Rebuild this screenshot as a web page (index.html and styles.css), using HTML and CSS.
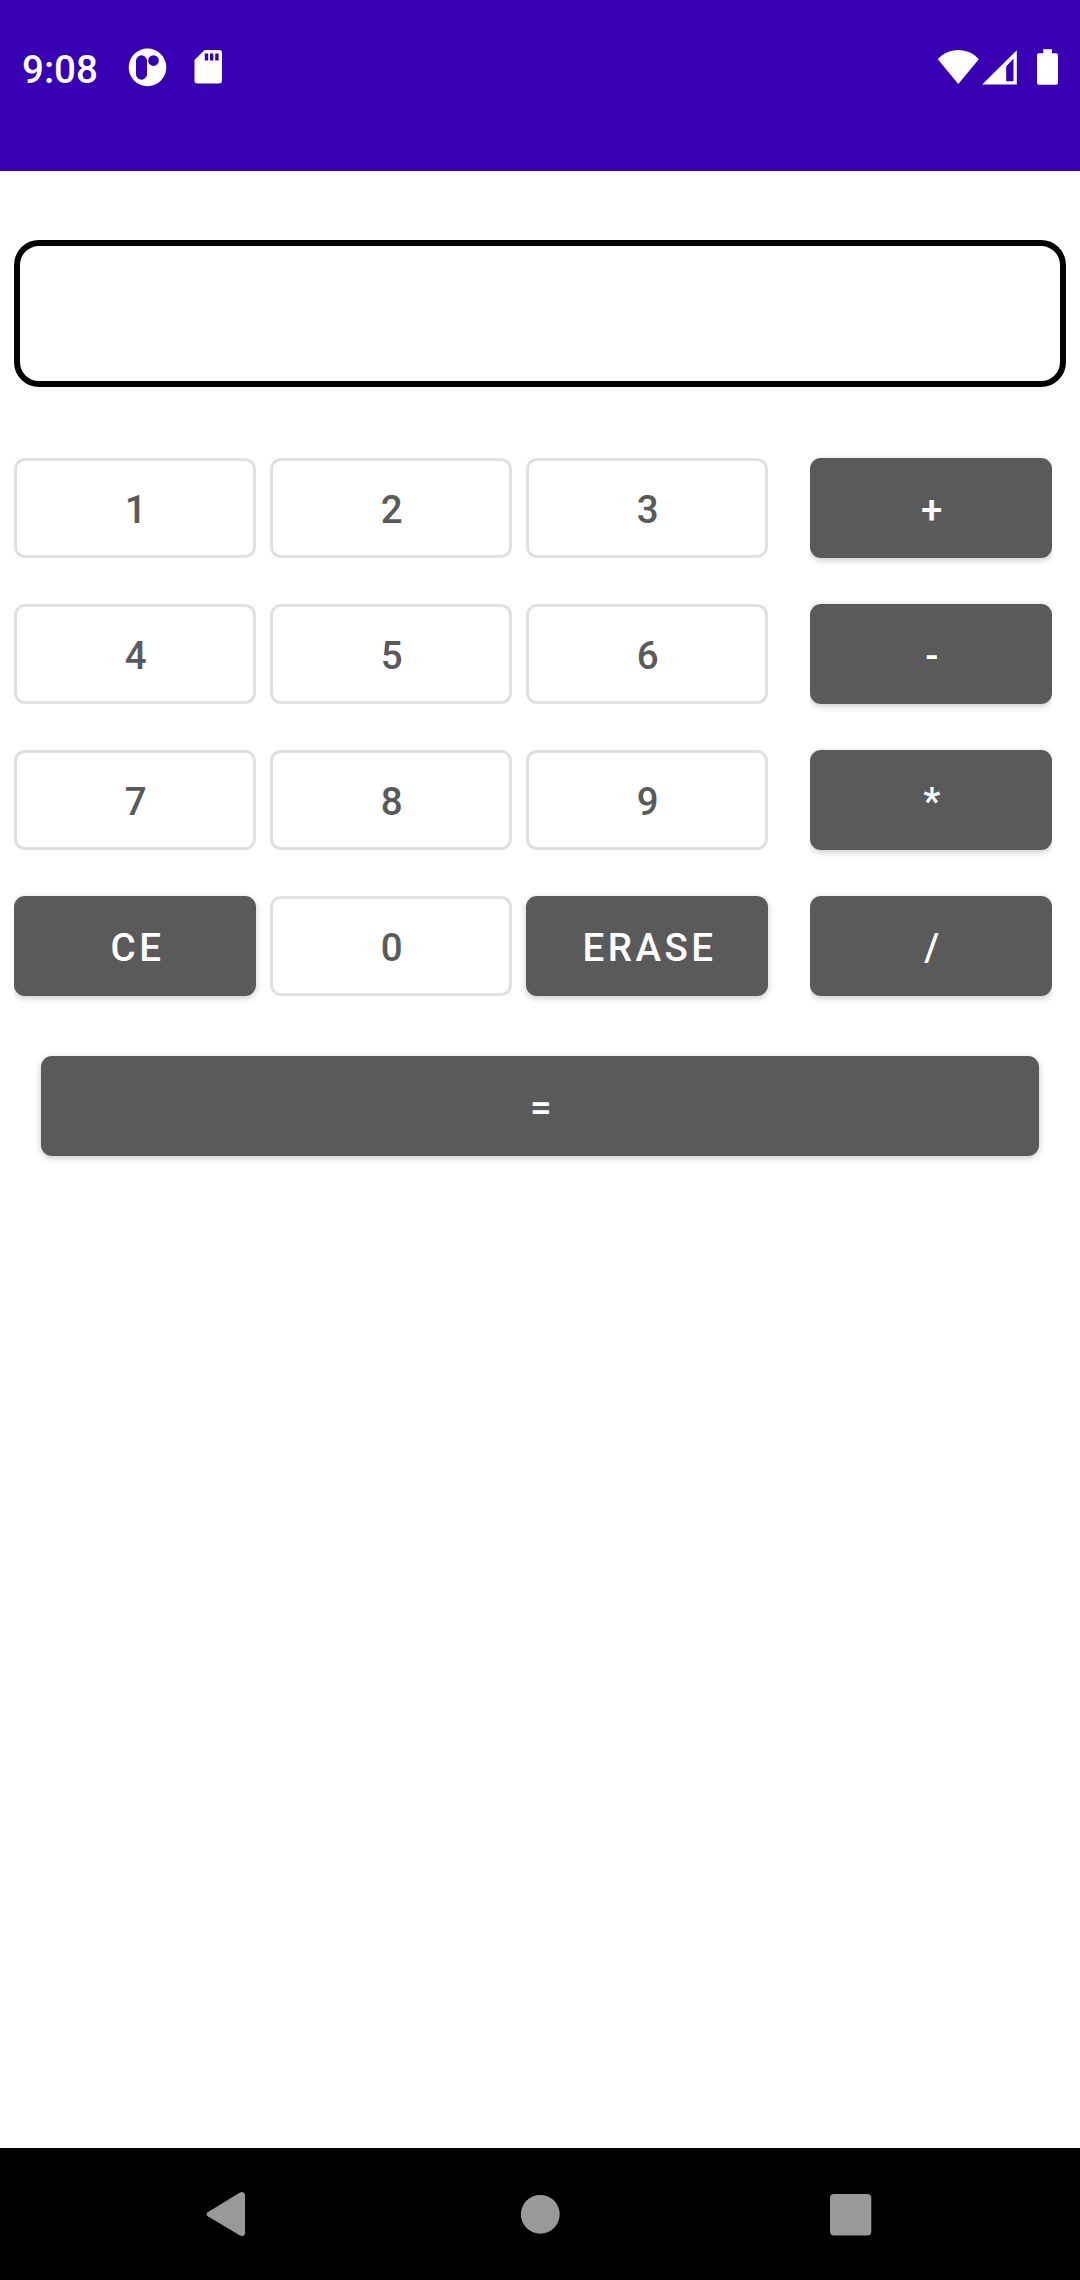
FILE: index.html
```
<!DOCTYPE html>
<html lang="en">
<head>
<meta charset="utf-8">
<title>Calculator</title>
<link rel="stylesheet" href="styles.css">
</head>
<body>
<header class="status-bar">
  <span class="clock">9:08</span>
  <svg class="icon-app" width="40" height="40" viewBox="0 0 40 40"><path fill="#fff" fill-rule="evenodd" d="M19.500 .6a18.800 18.800 0 1 1 0 37.600a18.800 18.800 0 0 1 0-37.600zM13.500 7.300a5.500 5.500 0 0 0-5.500 5.500v13.400a5.500 5.500 0 0 0 11 0v-13.400a5.500 5.500 0 0 0-5.500-5.500zM25.500 7.300a5.300 5.300 0 1 0 0 10.600a5.300 5.300 0 0 0 0-10.600z"/></svg>
  <svg class="icon-card" width="28" height="36" viewBox="0 0 28 36"><path fill="#fff" fill-rule="evenodd" d="M10.500 1H25a3 3 0 0 1 3 3v27.500a3 3 0 0 1-3 3H3.500a3 3 0 0 1-3-3V11zM10.800 4.500v7h3.400v-7zM16 4.500v7h3.400v-7zM21.200 4.500v7h3.400v-7z"/></svg>
  <span class="spacer"></span>
  <svg class="icon-wifi" width="42" height="36" viewBox="0 0 42 36"><path fill="#fff" d="M.8 10.200C6 4.500 13 1 21.300 1S36.500 4.500 41.800 10.200L21.300 35z"/></svg>
  <svg class="icon-signal" width="36" height="36" viewBox="0 0 36 36"><path fill="#fff" fill-rule="evenodd" d="M.2 35.500L34.800 1.200V35.500zM24.200 17.200V32.300H31.500V9.800z"/></svg>
  <svg class="icon-battery" width="22" height="37" viewBox="0 0 22 37"><path fill="#fff" d="M6.200 .3h8.800v4h4a2 2 0 0 1 2 2v27.500a2 2 0 0 1-2 2H2a2 2 0 0 1-2-2V6.300a2 2 0 0 1 2-2h4.200z"/></svg>
</header>
<main class="calculator">
  <div class="display"></div>
  <div class="keypad">
    <div class="digits">
      <button class="key outlined">1</button>
      <button class="key outlined">2</button>
      <button class="key outlined">3</button>
      <button class="key outlined">4</button>
      <button class="key outlined">5</button>
      <button class="key outlined">6</button>
      <button class="key outlined">7</button>
      <button class="key outlined">8</button>
      <button class="key outlined">9</button>
      <button class="key filled">CE</button>
      <button class="key outlined">0</button>
      <button class="key filled">ERASE</button>
    </div>
    <div class="operators">
      <button class="key filled">+</button>
      <button class="key filled">-</button>
      <button class="key filled">*</button>
      <button class="key filled">/</button>
    </div>
  </div>
  <button class="key filled equals">=</button>
</main>
<nav class="nav-bar">
  <svg width="44" height="48" viewBox="0 0 44 48"><path fill="#999" d="M3.800 22.200L35.500 2.700Q40 .5 41 4.500V43.500Q40 47.500 35.500 45.300L3.800 26.200Q1.200 24.200 3.800 22.200z"/></svg>
  <svg width="42" height="40" viewBox="0 0 42 40"><circle cx="22.300" cy="20.300" r="19.400" fill="#999"/></svg>
  <svg width="42" height="44" viewBox="0 0 42 44"><rect y="2" width="41.300" height="41.400" rx="4" fill="#999"/></svg>
</nav>
</body>
</html>
```
FILE: styles.css
```
* {
  box-sizing: border-box;
}

body {
  margin: 0;
  height: 2280px;
  display: flex;
  flex-direction: column;
  background: #fff;
  font-family: Roboto, "Liberation Sans", sans-serif;
}

svg {
  display: block;
  flex: none;
}

.status-bar {
  height: 171px;
  padding: 48px 21px 0 22px;
  display: flex;
  align-items: flex-start;
  background: #3700b3;
  color: #fff;
}

.clock {
  width: 106px;
  margin-top: -1px;
  font-size: 38.5px;
  line-height: 46px;
  font-weight: 500;
}

.icon-card {
  margin: 1px 0 0 26px;
}

.spacer {
  flex: 1;
}

.icon-wifi {
  margin-top: 1px;
}

.icon-signal {
  margin: 1px 19px 0 3px;
}

.icon-battery {
  margin-top: 1px;
}

.calculator {
  flex: 1;
  padding: 69px 14px 0;
}

.display {
  height: 147px;
  border: 6px solid #000;
  border-radius: 25px;
}

.keypad {
  margin-top: 71px;
  display: flex;
  gap: 28px;
}

.digits,
.operators {
  display: grid;
  grid-auto-rows: 100px;
  row-gap: 46px;
  clip-path: inset(-20px 0);
}

.digits {
  grid-template-columns: repeat(3, 242px);
  column-gap: 14px;
  padding-right: 14px;
}

.operators {
  grid-template-columns: 242px;
}

.key {
  height: 100px;
  margin: 0;
  padding: 4px 0 0 5px;
  border: 0;
  border-radius: 11px;
  font-family: inherit;
  font-size: 38.5px;
  line-height: 46px;
  font-weight: 500;
  letter-spacing: 3.44px;
  text-align: center;
}

.outlined {
  background: #fff;
  color: #5a5a5a;
  box-shadow: inset 0 0 0 3px #e0e0e0;
}

.filled {
  background: #5a5a5a;
  color: #fff;
  box-shadow: 0 2px 7px rgba(0, 0, 0, 0.22);
}

.equals {
  display: block;
  width: 998px;
  margin: 60px 0 0 27px;
}

.nav-bar {
  height: 132px;
  padding: 0 208px 0 204px;
  display: flex;
  align-items: center;
  justify-content: space-between;
  background: #000;
}
```
